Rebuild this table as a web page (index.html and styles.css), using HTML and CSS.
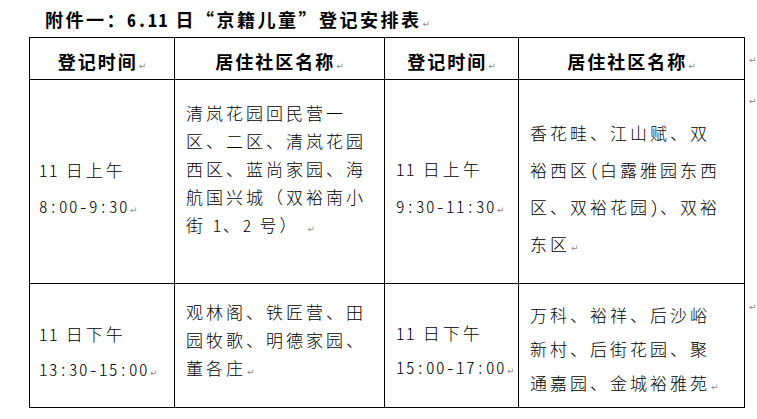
FILE: index.html
```html
<!DOCTYPE html>
<html lang="zh-CN">
<head>
<meta charset="utf-8">
<title>附件一</title>
<link rel="stylesheet" href="styles.css">
</head>
<body>
<div class="page">
  <h1 class="title">附件一：<span class="tnum">6.11</span> 日“京籍儿童”登记安排表<span class="ret">↵</span></h1>
  <table class="sheet">
    <colgroup>
      <col class="c1"><col class="c2"><col class="c3"><col class="c4"><col class="c5">
    </colgroup>
    <tr class="head">
      <th>登记时间<span class="ret">↵</span></th>
      <th>居住社区名称<span class="ret">↵</span></th>
      <th>登记时间<span class="ret">↵</span></th>
      <th>居住社区名称<span class="ret">↵</span></th>
      <td class="end"><span class="ret">↵</span></td>
    </tr>
    <tr class="r2">
      <td class="time t-a"><span class="num">11</span> 日上午<br><span class="num">8:00-9:30</span><span class="ret">↵</span></td>
      <td class="list l-a">清岚花园回民营一<br>区、二区、清岚花园<br>西区、蓝尚家园、海<br>航国兴城（双裕南小<br>街 <span class="num">1</span>、<span class="num">2</span> 号）<span class="ret gap">↵</span></td>
      <td class="time t-b"><span class="num">11</span> 日上午<br><span class="num">9:30-11:30</span><span class="ret">↵</span></td>
      <td class="list l-b">香花畦、江山赋、双<br>裕西区<span class="num">(</span>白露雅园东西<br>区、双裕花园<span class="num">)</span>、双裕<br>东区<span class="ret">↵</span></td>
      <td class="end"><span class="ret">↵</span></td>
    </tr>
    <tr class="r3">
      <td class="time t-c"><span class="num">11</span> 日下午<br><span class="num">13:30-15:00</span><span class="ret">↵</span></td>
      <td class="list l-c">观林阁、铁匠营、田<br>园牧歌、明德家园、<br>董各庄<span class="ret">↵</span></td>
      <td class="time t-d"><span class="num">11</span> 日下午<br><span class="num">15:00-17:00</span><span class="ret">↵</span></td>
      <td class="list l-d">万科、裕祥、后沙峪<br>新村、后街花园、聚<br>通嘉园、金城裕雅苑<span class="ret">↵</span></td>
      <td class="end"><span class="ret">↵</span></td>
    </tr>
  </table>
</div>
</body>
</html>
```

FILE: styles.css
```css
html, body {
  margin: 0;
  padding: 0;
  background: #ffffff;
}

body {
  font-family: "Noto Sans CJK SC", "Noto Sans", sans-serif;
  color: #000;
}

.page {
  width: 757px;
  height: 419px;
  overflow: hidden;
}

.title {
  margin: 0;
  height: 37px;
  padding: 8px 0 0 45px;
  box-sizing: border-box;
  font-size: 18px;
  line-height: 22px;
  font-weight: 700;
  letter-spacing: 2.5px;
  white-space: nowrap;
}

.tnum {
  font-feature-settings: "hwid" 1;
  letter-spacing: 1.5px;
}

.ret {
  font-family: "DejaVu Sans", sans-serif;
  font-weight: 400;
  font-size: 9px;
  color: #8a8a8a;
  letter-spacing: 0;
  margin-left: 1px;
  line-height: 0;
}

.ret.gap {
  margin-left: 8px;
}

.sheet {
  margin-left: 29px;
  border-collapse: collapse;
  table-layout: fixed;
  width: 729px;
}

.c1 { width: 145px; }
.c2 { width: 210px; }
.c3 { width: 134px; }
.c4 { width: 226px; }
.c5 { width: 14px; }

.sheet th,
.sheet td {
  border: 1px solid #000;
  vertical-align: top;
  white-space: nowrap;
  font-size: 17px;
  letter-spacing: 3px;
  font-weight: 300;
  text-align: left;
}

.sheet td.end {
  border: none;
  padding: 0 0 0 3px;
}

.head { height: 42px; }
.r2 { height: 204px; }
.r3 { height: 124px; }

.head th {
  font-weight: 700;
  font-size: 18px;
  letter-spacing: 2px;
  text-align: center;
  line-height: 24px;
  padding: 11px 0 0 0;
}

.head td.end { padding-top: 9px; line-height: 18px; }
.r2 td.end { padding-top: 8px; line-height: 18px; }
.r3 td.end { padding-top: 10px; line-height: 18px; }

.num {
  font-feature-settings: "hwid" 1;
  letter-spacing: 1.5px;
}

.time { padding-left: 9px; padding-right: 0; }
.list { padding-left: 11px; padding-right: 0; }
.t-b, .t-d { padding-left: 11px; }

.t-a { line-height: 36px; padding-top: 72px; }
.l-a { line-height: 28px; padding-top: 19px; }
.t-b { line-height: 37px; padding-top: 70px; }
.l-b { line-height: 37px; padding-top: 34px; }
.t-c { line-height: 35px; padding-top: 32px; }
.l-c { line-height: 28px; padding-top: 14px; }
.t-d { line-height: 34px; padding-top: 32px; }
.l-d { line-height: 34px; padding-top: 14px; }
```
